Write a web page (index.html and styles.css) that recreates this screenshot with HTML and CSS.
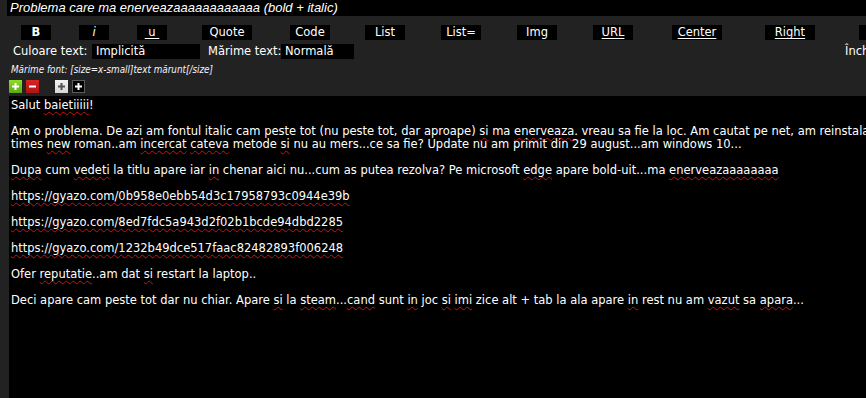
FILE: index.html
```html
<!DOCTYPE html>
<html lang="ro">
<head>
<meta charset="utf-8">
<title>Editor</title>
<link rel="stylesheet" href="styles.css">
</head>
<body>
<div class="page">
  <div class="title">Problema care ma enerveazaaaaaaaaaaaa (bold + italic)</div>

  <div class="toolbar">
    <div class="cell"><span class="btn w30 bold">B</span></div>
    <div class="cell"><span class="btn w30 ital">i</span></div>
    <div class="cell"><span class="btn w30"><span class="ul">&nbsp;u&nbsp;</span></span></div>
    <div class="cell"><span class="btn w50">Quote</span></div>
    <div class="cell"><span class="btn w40">Code</span></div>
    <div class="cell"><span class="btn w40">List</span></div>
    <div class="cell"><span class="btn w40">List=</span></div>
    <div class="cell"><span class="btn w40">Img</span></div>
    <div class="cell"><span class="btn w40"><span class="ul">URL</span></span></div>
    <div class="cell"><span class="btn w50"><span class="ul">Center</span></span></div>
    <div class="cell"><span class="btn w50"><span class="ul">Right</span></span></div>
    <div class="cell"><span class="btn w50"><span class="ul">Left</span></span></div>
  </div>

  <div class="opts">
    <span class="lbl">Culoare text:</span>
    <span class="sel sel-color">Implicită</span>
    <span class="lbl lbl-size">Mărime text:</span>
    <span class="sel sel-size">Normală</span>
    <span class="close">Închide toate tag-urile</span>
  </div>

  <div class="hint">Mărime font: [size=x-small]text mărunt[/size]</div>

  <div class="mini">
    <span class="mb green"><svg width="13" height="13" viewBox="0 0 13 13"><path d="M3 6.5h7M6.5 3v7" stroke="#fff" stroke-width="2"/></svg></span>
    <span class="mb red"><svg width="13" height="13" viewBox="0 0 13 13"><path d="M3 6.5h7" stroke="#fff" stroke-width="2"/></svg></span>
    <span class="mb white gap"><svg width="13" height="13" viewBox="0 0 13 13"><path d="M3 6.5h7M6.5 3v7" stroke="#555" stroke-width="2"/></svg></span>
    <span class="mb black"><svg width="13" height="13" viewBox="0 0 13 13"><path d="M3 6.5h7M6.5 3v7" stroke="#fff" stroke-width="2"/></svg></span>
  </div>

  <div class="editor">Salut <span class="sp">baietiiiii</span>!

Am o problema. De azi am fontul italic cam peste tot (nu peste tot, dar aproape) <span class="sp">si</span> ma <span class="sp">enerveaza</span>. vreau sa fie la loc. Am cautat pe net, am reinstalat fontul
times <span class="sp">new</span> roman..am <span class="sp">incercat</span> <span class="sp">cateva</span> metode <span class="sp">si</span> nu au mers...ce sa fie? Update nu am primit din 29 august...am windows 10...

<span class="sp">Dupa</span> cum <span class="sp">vedeti</span> la titlu apare iar <span class="sp">in</span> chenar aici nu...cum as putea rezolva? Pe microsoft <span class="sp">edge</span> apare bold-uit...ma <span class="sp">enerveazaaaaaaaa</span>

<span class="sp">https://gyazo.com/0b958e0ebb54d3c17958793c0944e39b</span>

<span class="sp">https://gyazo.com/8ed7fdc5a943d2f02b1bcde94dbd2285</span>

<span class="sp">https://gyazo.com/1232b49dce517faac82482893f006248</span>

Ofer <span class="sp">reputatie</span>..am dat <span class="sp">si</span> restart la laptop..

Deci apare cam peste tot dar nu chiar. Apare <span class="sp">si</span> la <span class="sp">steam</span>...<span class="sp">cand</span> sunt <span class="sp">in</span> joc <span class="sp">si</span> <span class="sp">imi</span> zice alt + tab la ala apare <span class="sp">in</span> rest nu am <span class="sp">vazut</span> sa <span class="sp">apara</span>...</div>
</div>
</body>
</html>
```

FILE: styles.css
```css
html, body {
  margin: 0;
  padding: 0;
  background: #222222;
  overflow: hidden;
}

.page {
  width: 1200px;
  height: 398px;
  display: flex;
  flex-direction: column;
  font-family: "DejaVu Sans", Verdana, sans-serif;
  font-size: 11px;
  color: #ffffff;
}

.title {
  margin-left: 7px;
  height: 16px;
  line-height: 16px;
  padding-left: 3px;
  background: #000;
  color: #fff;
  font-family: "Liberation Sans", Arial, sans-serif;
  font-style: italic;
  font-size: 13px;
  white-space: nowrap;
}

.toolbar {
  margin-top: 9px;
  margin-left: 7px;
  display: grid;
  grid-template-columns: 58px 58px 58px 92px 74px 76px 76px 76px 76px 92px 94px 94px;
  justify-items: center;
}

.btn {
  display: block;
  height: 15px;
  line-height: 15px;
  background: #000;
  color: #fff;
  text-align: center;
  white-space: nowrap;
  overflow: hidden;
  font-size: 11.5px;
}

.w30 { width: 30px; }
.w40 { width: 40px; }
.w50 { width: 50px; }

.bold { font-weight: bold; }
.ital { font-style: italic; }
.ul { text-decoration: underline; text-underline-offset: 2px; }

.opts {
  margin-top: 4px;
  height: 15px;
  display: flex;
  align-items: center;
  padding-left: 13px;
  white-space: nowrap;
  line-height: 15px;
  font-size: 11.5px;
}

.lbl {
  width: 79px;
}

.lbl-size {
  width: 73px;
  margin-left: 8px;
}

.sel {
  height: 15px;
  background: #000;
  color: #fff;
  padding-left: 4px;
  box-sizing: border-box;
}

.sel-color { width: 108px; }
.sel-size { width: 73px; }

.close {
  margin-left: 491px;
}

.hint {
  margin-top: 3px;
  height: 15px;
  line-height: 15px;
  padding-left: 11px;
  font-family: "DejaVu Sans Condensed", "DejaVu Sans", sans-serif;
  font-stretch: condensed;
  font-style: italic;
  font-weight: normal;
  font-size: 9.8px;
  color: #f2f4ff;
  white-space: nowrap;
}

.mini {
  margin-top: 3px;
  margin-left: 9px;
  height: 13px;
  display: flex;
  gap: 4px;
}

.mb {
  width: 13px;
  height: 13px;
  display: block;
  box-sizing: border-box;
}

.mb svg { display: block; }

.gap { margin-left: 12px; }

.green { background: linear-gradient(#8fdc2a, #5aa812); }
.red { background: linear-gradient(#d82424, #b41212); }
.white { background: linear-gradient(#f4f4f4, #d6d6d6); }
.black { background: #000; box-shadow: inset 0 0 0 1px #5a5a5a; }

.editor {
  margin-top: 3px;
  margin-left: 9px;
  flex: 1;
  background: #000;
  color: #fff;
  padding: 3px 2px;
  font-family: "DejaVu Sans", Verdana, sans-serif;
  font-size: 11.5px;
  line-height: 13px;
  white-space: pre;
  overflow: hidden;
}

.sp {
  text-decoration: underline wavy #c81414;
  text-decoration-thickness: 1px;
  text-underline-offset: 2px;
}
```
